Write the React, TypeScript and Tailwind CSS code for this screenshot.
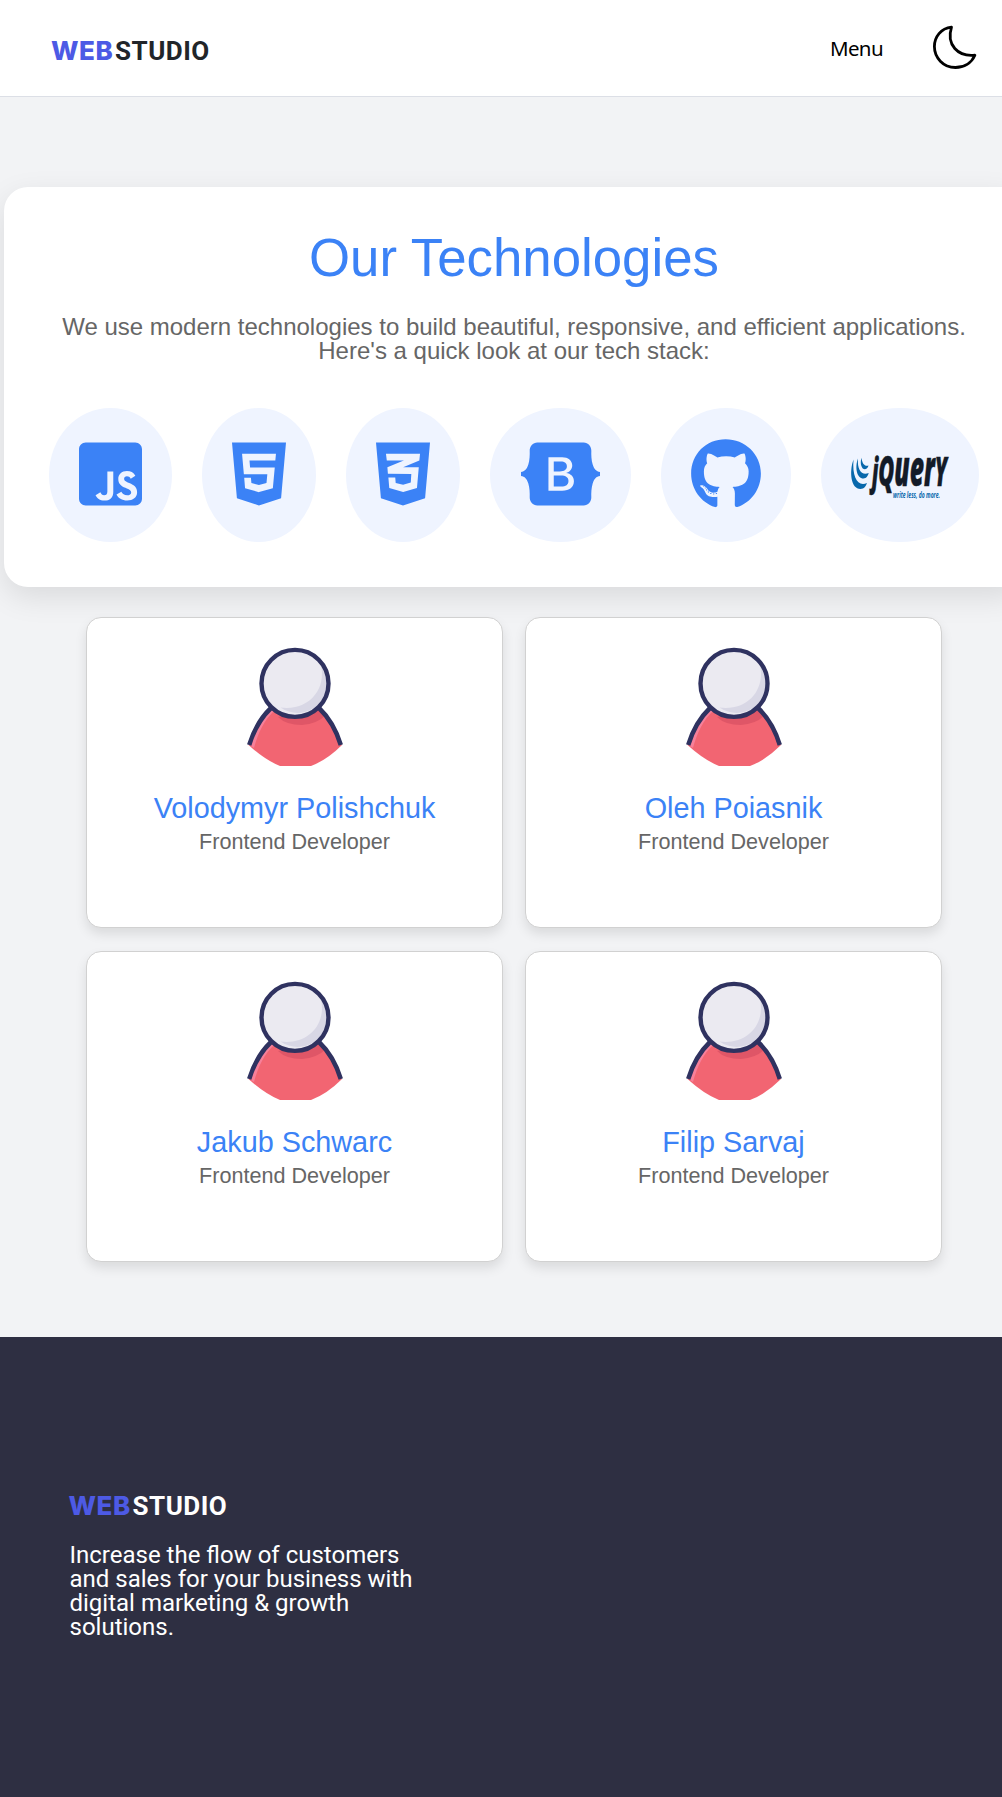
import { FaJsSquare, FaHtml5, FaCss3Alt, FaBootstrap, FaGithub } from "react-icons/fa";

const icons = [
  { Icon: FaJsSquare, size: "w-[63px] h-[72px]" },
  { Icon: FaHtml5, size: "w-[54px] h-[72px]" },
  { Icon: FaCss3Alt, size: "w-[54px] h-[72px]" },
  { Icon: FaBootstrap, size: "w-[81px] h-[72px]" },
  { Icon: FaGithub, size: "w-[70px] h-[72px]" },
];

const team = ["Volodymyr Polishchuk", "Oleh Poiasnik", "Jakub Schwarc", "Filip Sarvaj"];

function Logo({ tone }: { tone: string }) {
  return (
    <div className="flex items-baseline text-[26px] leading-[30px] font-bold whitespace-nowrap">
      <span className="-ml-px inline-block w-[64px] font-[Inter] font-extrabold tracking-[0.6px] text-[#4d5ae5]">WEB</span>
      <span className={`font-[Roboto] tracking-[0.52px] ${tone}`}>STUDIO</span>
    </div>
  );
}

function Moon() {
  return (
    <svg className="mb-[3px] h-[46px] w-[46px]" viewBox="0 0 46 46" fill="none" stroke="#000" strokeWidth="2.800" strokeLinejoin="round">
      <path d="M20.500 3.200C10 4.300 3.400 12.800 3.400 22.600C3.400 33.600 12.200 43.500 24.400 43.500C33 43.500 40.500 39 43.900 31.200C27 33 15 21 20.500 3.200Z" />
    </svg>
  );
}

function JQueryLogo() {
  return (
    <svg className="h-[46px] w-[98px] overflow-visible" viewBox="0 0 98 46">
      <g fill="#0868ac">
        <path d="M2.500 5.500C-2 18 0 35 9.500 35C13 35 15 32 16 29C7 33 1 24 2.500 5.500Z" />
        <path d="M7 4.500C3.500 14 6 24.500 12.500 24.500C15.500 24.500 17 21.500 17.700 19C11 22 6 16 7 4.500Z" />
        <path d="M10.500 3.700C8.500 10 11 15.500 14 15.300C16 15.200 17 13 17.500 11.500C14 13 11 9.500 10.500 3.700Z" />
      </g>
      <text x="21" y="32" className="font-[Open_Sans] font-extrabold italic" fill="#131b28" stroke="#131b28" strokeWidth="0.500" textLength="75" lengthAdjust="spacingAndGlyphs">
        <tspan fontSize="38">j</tspan>
        <tspan fontSize="43">Q</tspan>
        <tspan fontSize="49">uer</tspan>
        <tspan fontSize="40" className="uppercase">y</tspan>
      </text>
      <text x="42" y="44" className="font-[Open_Sans] font-bold italic" fontSize="9" fill="#0868ac" textLength="47" lengthAdjust="spacingAndGlyphs">write less, do more.</text>
    </svg>
  );
}

function Avatar() {
  return (
    <svg className="h-[120px] w-[120px]" viewBox="0 0 120 120">
      <path d="M36 60C25 70 17 84 13.500 98Q30 113 45 119H76Q92 113 107 98C103 84 95 70 84 60Z" fill="#f26572" />
      <path d="M37 62C27 72 20 84 16 99L19 101C23 86 29 73 40 63Z" fill="#f7809a" />
      <path d="M43 70Q51 78 67 78Q82 77 91 68L84 60Z" fill="#df5667" />
      <path d="M36 61C25.500 71 18.500 84 14.200 98M84 61C94.500 71 101.500 84 105.800 98" fill="none" stroke="#2f3260" strokeWidth="4.500" />
      <circle cx="60" cy="36.400" r="33.500" fill="#ebeaf1" />
      <path d="M86 18C91.500 43 73.500 64 45.500 60.500C71.500 78 105.500 50 86 18Z" fill="#d8d7e5" />
      <circle cx="60" cy="36.400" r="33.500" fill="none" stroke="#2f3260" strokeWidth="4.400" />
    </svg>
  );
}

export default function App() {
  return (
    <div className="flex h-[1797px] w-full flex-col overflow-hidden bg-[#f2f3f5] font-['Liberation_Sans',sans-serif]">
      <header className="flex h-[97px] shrink-0 items-center border-b border-[#dcdfe6] bg-white pr-[25px] pl-[52px]">
        <div className="pt-[5px]">
          <Logo tone="text-[#212529]" />
        </div>
        <a className="mr-[48px] ml-auto pt-px font-['Noto_Sans'] text-[20.5px] tracking-[-0.6px] text-black">Menu</a>
        <Moon />
      </header>

      <main className="flex h-[1240px] shrink-0 flex-col pt-[90px]">
        <section className="ml-1 h-[400px] w-[1020px] shrink-0 rounded-[24px] bg-white px-[45px] pt-[42px] text-center shadow-[0_10px_30px_rgba(0,0,0,0.1)]">
          <h1 className="text-[52.8px] leading-[58px] text-[#3b82f6]">Our Technologies</h1>
          <p className="mt-[28px] text-[24px] leading-[24px] text-[#666]">
            We use modern technologies to build beautiful, responsive, and efficient applications.
            <br />
            Here's a quick look at our tech stack:
          </p>
          <div className="mt-[45px] flex justify-center gap-[30px]">
            {icons.map(({ Icon, size }, i) => (
              <div key={i} className="h-[134px] rounded-[50%] bg-[#eff4ff] p-[30px] text-[#3b82f6]">
                <Icon className={size} />
              </div>
            ))}
            <div className="flex h-[134px] items-center rounded-[50%] bg-[#eff4ff] px-[30px] pt-1">
              <JQueryLogo />
            </div>
          </div>
        </section>

        <section className="mt-[30px] ml-[86px] grid w-[856px] grid-cols-2 gap-x-[22px] gap-y-[23px]">
          {team.map((name) => (
            <article key={name} className="flex h-[311px] flex-col items-center rounded-[15px] border border-[#d1d1d1] bg-white pt-[29px] shadow-[0_6px_12px_rgba(0,0,0,0.1)]">
              <Avatar />
              <h2 className="mt-[25px] text-[28.8px] leading-[32px] text-[#3b82f6]">{name}</h2>
              <p className="mt-[4.5px] text-[21.6px] leading-[26px] text-[#666]">Frontend Developer</p>
            </article>
          ))}
        </section>
      </main>

      <footer className="flex-1 bg-[#2e2f42] pt-[154px] pl-[69.5px] font-[Roboto] text-white">
        <Logo tone="text-white" />
        <p className="mt-[22px] w-[360px] text-[24px] leading-[24px]">
          Increase the flow of customers and sales for your business with digital marketing &amp; growth solutions.
        </p>
      </footer>
    </div>
  );
}
